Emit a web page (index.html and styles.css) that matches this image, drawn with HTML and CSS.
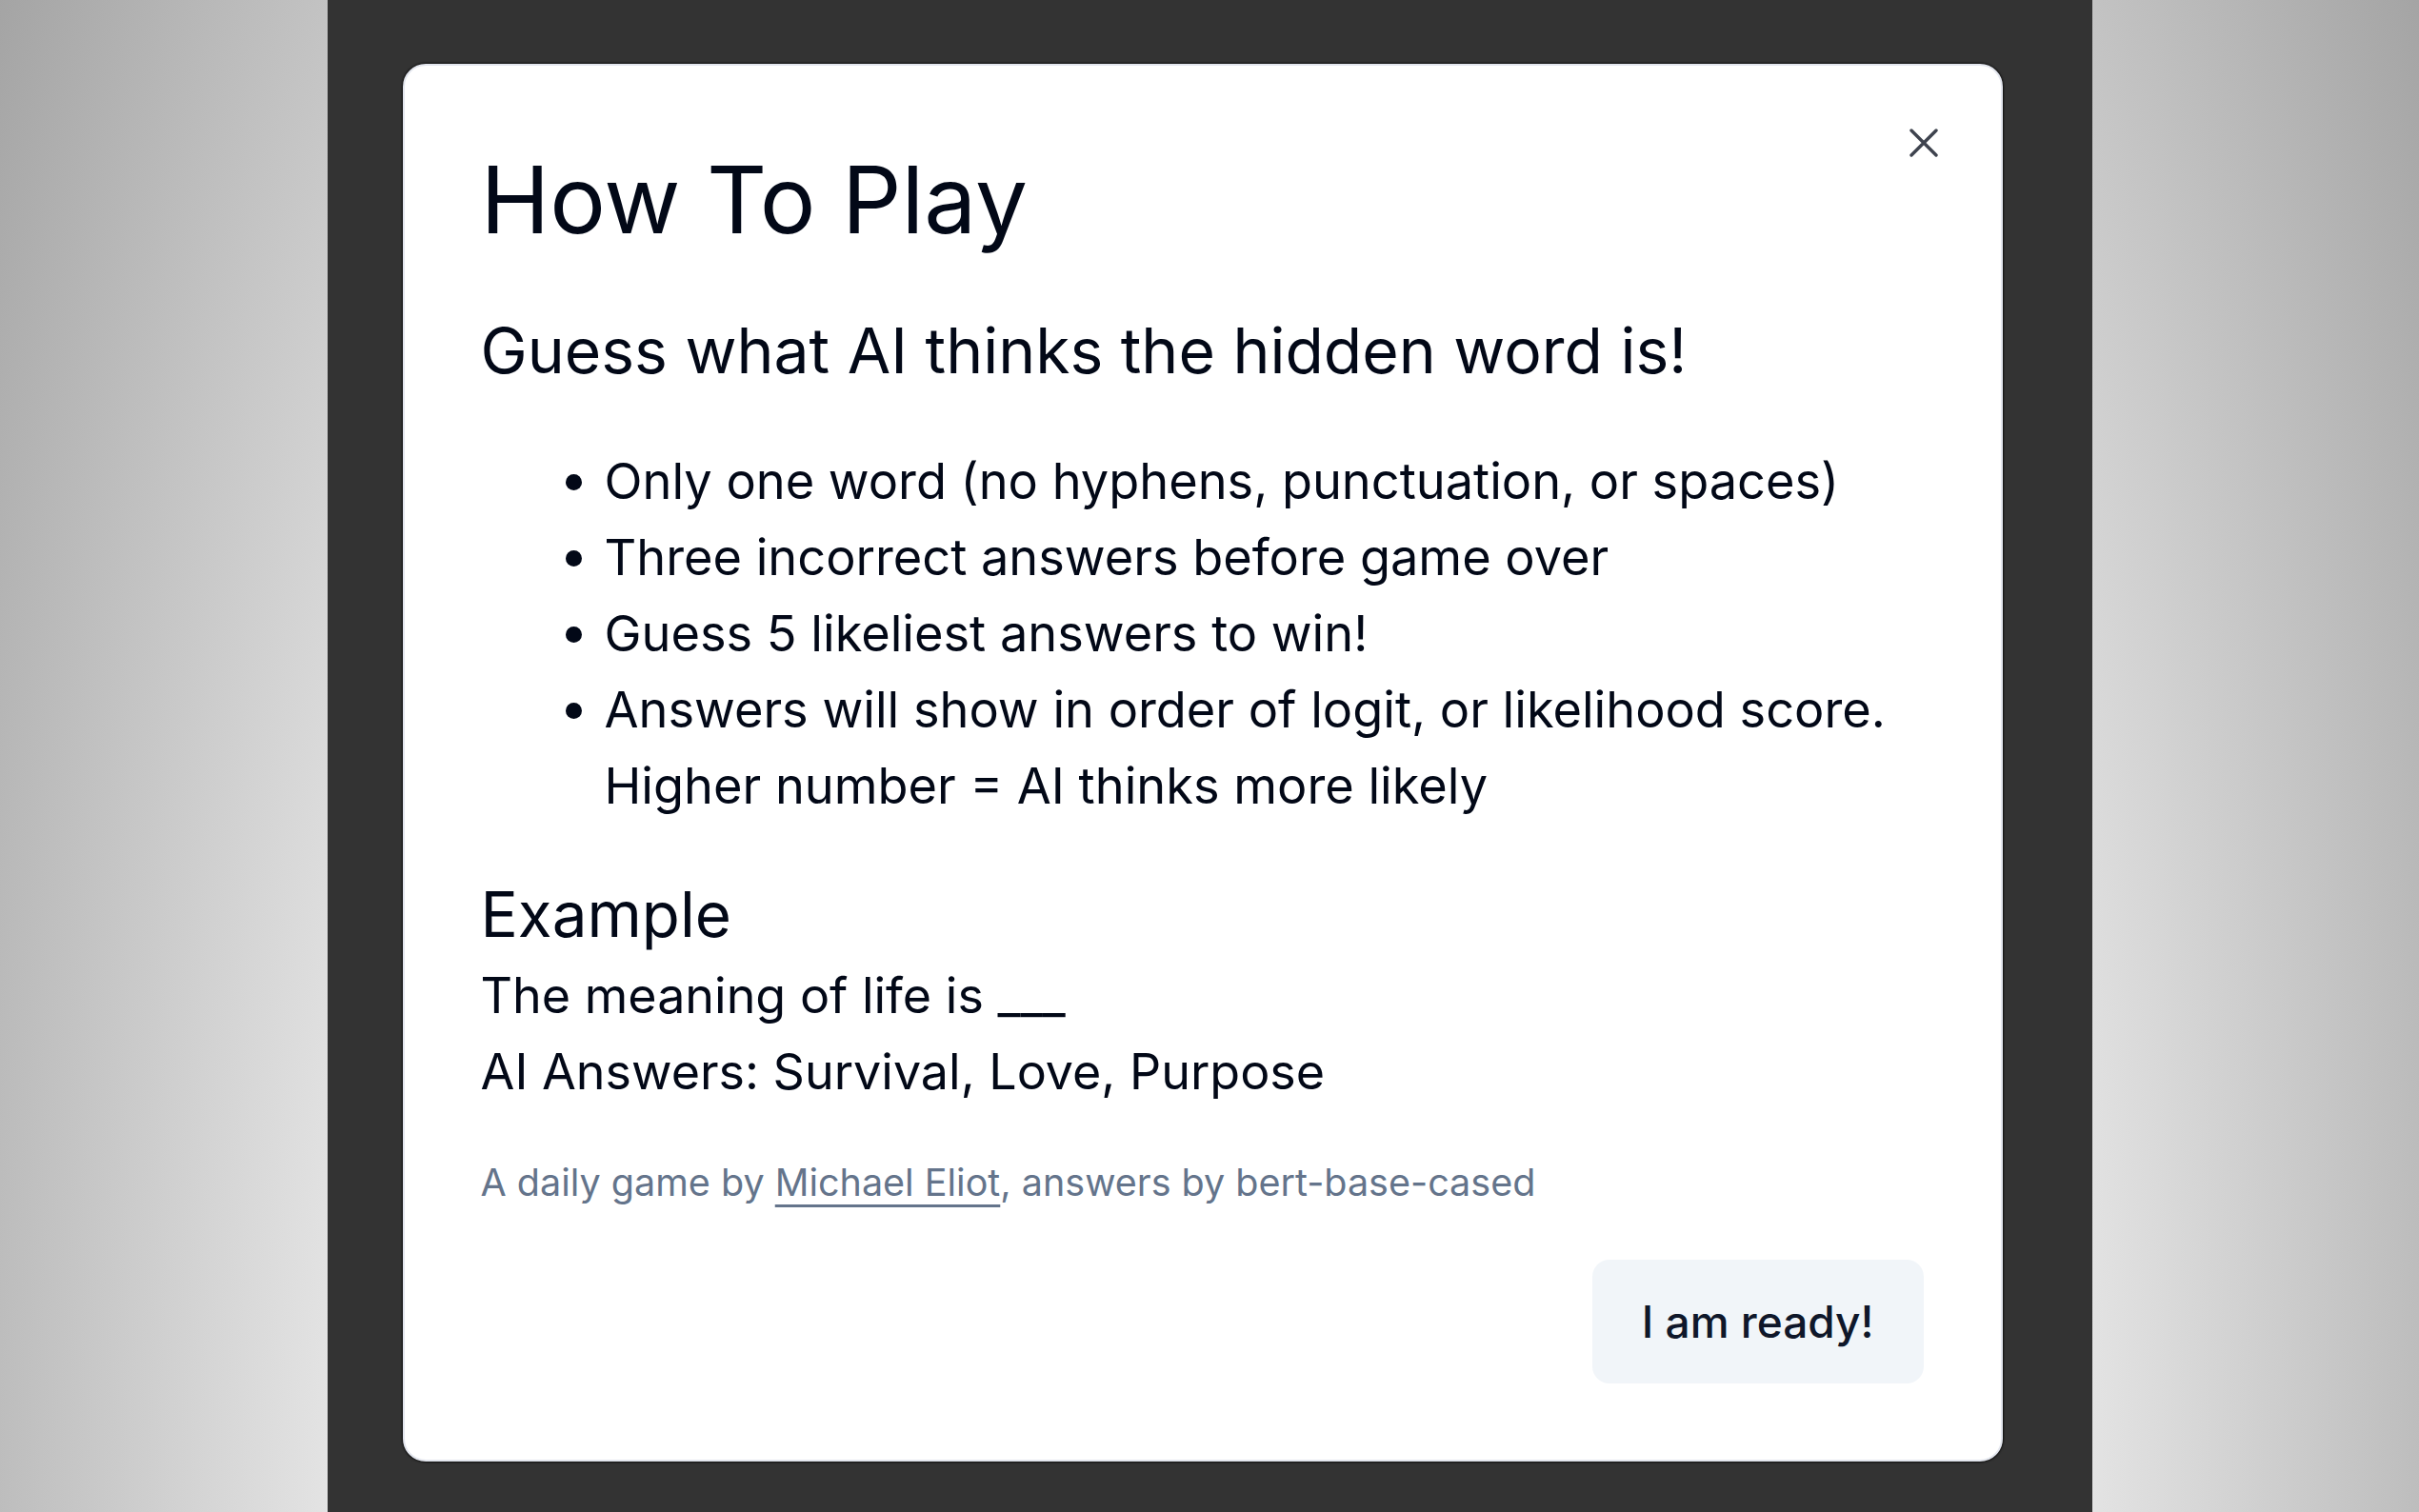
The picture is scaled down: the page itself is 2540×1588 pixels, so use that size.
FILE: index.html
```html
<!DOCTYPE html>
<html lang="en">
<head>
<meta charset="utf-8">
<title>How To Play</title>
<link rel="stylesheet" href="styles.css">
</head>
<body>
<div class="panel">
  <div class="modal" role="dialog">
    <button class="close" aria-label="Close">
      <svg viewBox="0 0 30 30" width="30" height="30"><path d="M2 2 L28 28 M28 2 L2 28" fill="none" stroke="#3e434e" stroke-width="3.4" stroke-linecap="round"/></svg>
    </button>
    <h1 class="title">How To Play</h1>
    <h2 class="subtitle">Guess what AI thinks the hidden word is!</h2>
    <ul class="rules">
      <li>Only one word (no hyphens, punctuation, or spaces)</li>
      <li>Three incorrect answers before game over</li>
      <li>Guess 5 likeliest answers to win!</li>
      <li>Answers will show in order of logit, or likelihood score. Higher number = AI thinks more likely</li>
    </ul>
    <h3 class="example-title">Example</h3>
    <p class="example-line">The meaning of life is ___</p>
    <p class="example-line">AI Answers: Survival, Love, Purpose</p>
    <p class="credit">A daily game by <a href="#" class="credit-link">Michael Eliot</a>, answers by bert-base-cased</p>
    <div class="actions">
      <button class="ready">I am ready!</button>
    </div>
  </div>
</div>
</body>
</html>
```
FILE: styles.css
```css
html, body {
  margin: 0;
  padding: 0;
}
body {
  height: 1588px;
  overflow: hidden;
  display: flex;
  justify-content: center;
  font-family: Inter, "Noto Sans", sans-serif;
  color: #020817;
  background: radial-gradient(1000px 2000px at 50% 100%, #f2f2f2 0, #e6e6e6 900px, #a4a4a4 1500px);
}
.panel {
  width: 1853px;
  height: 1588px;
  background: #333333;
  box-sizing: border-box;
  padding-top: 67px;
  padding-left: 79px;
}
.modal {
  position: relative;
  width: 1680px;
  box-sizing: border-box;
  background: #ffffff;
  border: 2px solid #e3e6ee;
  border-radius: 24px;
  box-shadow: 0 0 2px 1px rgba(0, 0, 0, 0.7);
  padding: 82px 81px 80px 80px;
}
.close {
  position: absolute;
  top: 66px;
  right: 66px;
  width: 30px;
  height: 30px;
  padding: 0;
  border: 0;
  background: transparent;
  display: flex;
}
.title {
  margin: 0;
  font-size: 98px;
  line-height: 118px;
  font-weight: 400;
}
.subtitle {
  margin: 59px 0 0;
  font-size: 66px;
  line-height: 80px;
  font-weight: 400;
}
.rules {
  margin: 57px 0 0;
  padding-left: 130px;
  font-size: 52.3px;
  line-height: 80px;
  list-style: disc;
}
.example-title {
  margin: 56px 0 0;
  font-size: 65.5px;
  line-height: 80px;
  font-weight: 400;
}
.example-line {
  margin: 0;
  font-size: 52px;
  line-height: 80px;
}
.example-title + .example-line {
  margin-top: 5px;
}
.credit {
  margin: 44px 0 0;
  font-size: 39.5px;
  line-height: 64px;
  color: #64748b;
}
.credit-link {
  color: #64748b;
  text-decoration: underline;
  text-decoration-thickness: 3px;
  text-underline-offset: 9px;
}
.actions {
  display: flex;
  justify-content: flex-end;
  margin-top: 49px;
}
.ready {
  height: 130px;
  padding: 0 52px;
  border: 0;
  border-radius: 18px;
  background: #f1f5f9;
  color: #0f172a;
  font-family: Inter, "Noto Sans", sans-serif;
  font-size: 46px;
  font-weight: 500;
}
```
